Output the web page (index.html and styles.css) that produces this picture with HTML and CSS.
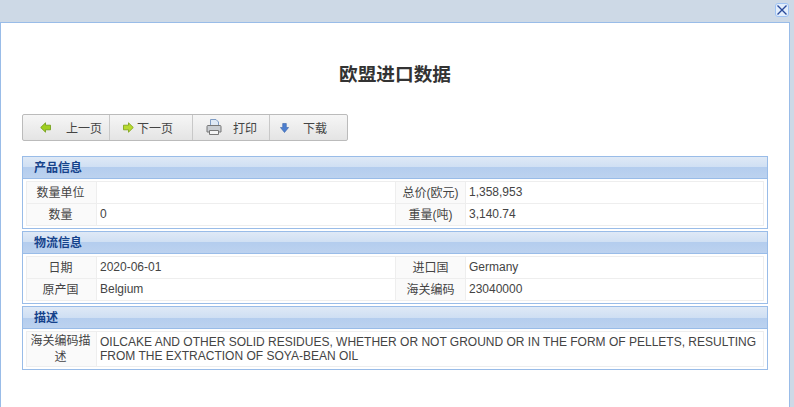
FILE: index.html
```html
<!DOCTYPE html>
<html lang="zh-CN">
<head>
<meta charset="utf-8">
<title>欧盟进口数据</title>
<link rel="stylesheet" href="styles.css">
</head>
<body>
<div class="topbar">
  <button class="close" aria-label="关闭"><svg width="12" height="12" viewBox="0 0 12 12"><path d="M1.500 1.500l9 9M10.500 1.500l-9 9" stroke="#2a4a9a" stroke-width="1.400" fill="none"/></svg></button>
</div>
<div class="window">
  <main class="content">
    <h1 class="title">欧盟进口数据</h1>
    <div class="toolbar">
      <div class="tool t1"><svg class="ic" width="11" height="11" viewBox="0 0 11 11"><path d="M.7 5.500L5.500.8v2.400h5v4.600h-5v2.400z" fill="#a0cf20" stroke="#6d9a12" stroke-width=".8"/></svg><span class="lbl l1">上一页</span></div>
      <div class="tool t2"><svg class="ic" width="11" height="11" viewBox="0 0 11 11"><path d="M10.300 5.500L5.500.8v2.400h-5v4.600h5v2.400z" fill="#b8da30" stroke="#7a9f10" stroke-width=".8"/></svg><span class="lbl l2">下一页</span></div>
      <div class="tool t3"><svg class="ic" width="16" height="16" viewBox="0 0 16 16"><path d="M4.500.5h5.500l2.500 2.500v4.500h-8z" fill="#dfe9f5" stroke="#7f9cc4"/><path d="M1 7.500q0-1 1-1h12q1 0 1 1v5.500H1z" fill="#c9cdd2" stroke="#777"/><path d="M3.500 11.500h9v4h-9z" fill="#f4f4f4" stroke="#777"/></svg><span class="lbl l3">打印</span></div>
      <div class="tool t4"><svg class="ic" width="9" height="10" viewBox="0 0 9 10"><path d="M2.700.5h3.600v4h2.300L4.500 9.500.4 4.500h2.300z" fill="#4d7fd0" stroke="#3a64a8" stroke-width=".6"/></svg><span class="lbl l4">下载</span></div>
    </div>
    <section class="group">
      <h2 class="ghead">产品信息</h2>
      <table class="info">
        <tr><th>数量单位</th><td class="v1"></td><th>总价(欧元)</th><td>1,358,953</td></tr>
        <tr><th>数量</th><td class="v1">0</td><th>重量(吨)</th><td>3,140.74</td></tr>
      </table>
    </section>
    <section class="group">
      <h2 class="ghead">物流信息</h2>
      <table class="info">
        <tr><th>日期</th><td class="v1">2020-06-01</td><th>进口国</th><td>Germany</td></tr>
        <tr><th>原产国</th><td class="v1">Belgium</td><th>海关编码</th><td>23040000</td></tr>
      </table>
    </section>
    <section class="group">
      <h2 class="ghead">描述</h2>
      <table class="info desc">
        <tr><th>海关编码描述</th><td>OILCAKE AND OTHER SOLID RESIDUES, WHETHER OR NOT GROUND OR IN THE FORM OF PELLETS, RESULTING FROM THE EXTRACTION OF SOYA-BEAN OIL</td></tr>
      </table>
    </section>
  </main>
</div>
</body>
</html>
```
FILE: styles.css
```css
html, body { margin: 0; padding: 0; height: 100%; overflow: hidden; }
body {
  background: #cdd9e6;
  font-family: "Liberation Sans", "Noto Sans CJK SC", sans-serif;
  font-size: 12px;
  color: #444;
  display: flex;
  flex-direction: column;
}
.topbar { height: 22px; display: flex; justify-content: flex-end; padding: 3px 5px 0 0; box-sizing: border-box; flex: none; }
.close {
  width: 14px; height: 14px; padding: 0; margin: 0; box-sizing: border-box;
  border: 1px solid #9fc3f3; border-radius: 3px; background: #e2eefc;
  display: flex; align-items: center; justify-content: center;
}
.window {
  flex: 1; margin-right: 4px;
  background: #fff;
  border: 1px solid #99bce8;
  border-bottom: 0;
}
.content { padding: 0 21px; }
.title { margin: 0; padding-top: 40px; height: 51px; line-height: 24px; font-size: 18.667px; font-weight: bold; color: #333; text-align: center; width: 746px; }
.toolbar {
  display: flex; width: 326px; height: 27px; box-sizing: border-box;
  border: 1px solid #bbb; border-radius: 2px;
  background: linear-gradient(#f6f6f6, #e4e4e4);
  margin-bottom: 15px;
}
.tool { display: flex; align-items: center; height: 100%; padding-bottom: 1px; border-right: 1px solid #c8c8c8; box-sizing: border-box; }
.tool:last-child { border-right: 0; }
.t1 { width: 87px; padding-left: 17px; }
.t2 { width: 83px; padding-left: 13px; }
.t3 { width: 77px; padding-left: 13px; }
.t4 { flex: 1; padding-left: 10px; }
.t4 .ic { margin-top: 2px; }
.l1 { margin-left: 15px; }
.l2 { margin-left: 3px; }
.l3 { margin-left: 11px; }
.l4 { margin-left: 14px; }
.group { width: 746px; box-sizing: border-box; border: 1px solid #99bce8; margin-bottom: 2px; padding-bottom: 2px; }
.ghead {
  margin: 0; height: 20px; padding: 1px 0 0 11px; line-height: 21px;
  font-size: 12px; font-weight: bold; color: #15428b;
  background: linear-gradient(#dfe9f6 0, #cfdff3 50%, #b4cdee 50%, #bcd2ef 100%);
  border-bottom: 1px solid #99bce8;
}
.info { width: 738px; margin: 2px 3px 0; border-collapse: collapse; table-layout: fixed; border: 1px solid #eee; }
.info th, .info td { border: 1px solid #eee; font-weight: normal; line-height: 14px; color: #444; }
.info th { background: #fafafa; width: 63px; padding: 0 4px 0 2px; height: 21px; text-align: center; }
.info td + th { padding: 0 3px; }
.info td { padding: 0 3px 2px; height: 19px; }
.v1 { width: 292px; }
.desc td { padding: 3px 3px 3px; height: auto; }
.desc th { line-height: 16px; height: auto; }
```
